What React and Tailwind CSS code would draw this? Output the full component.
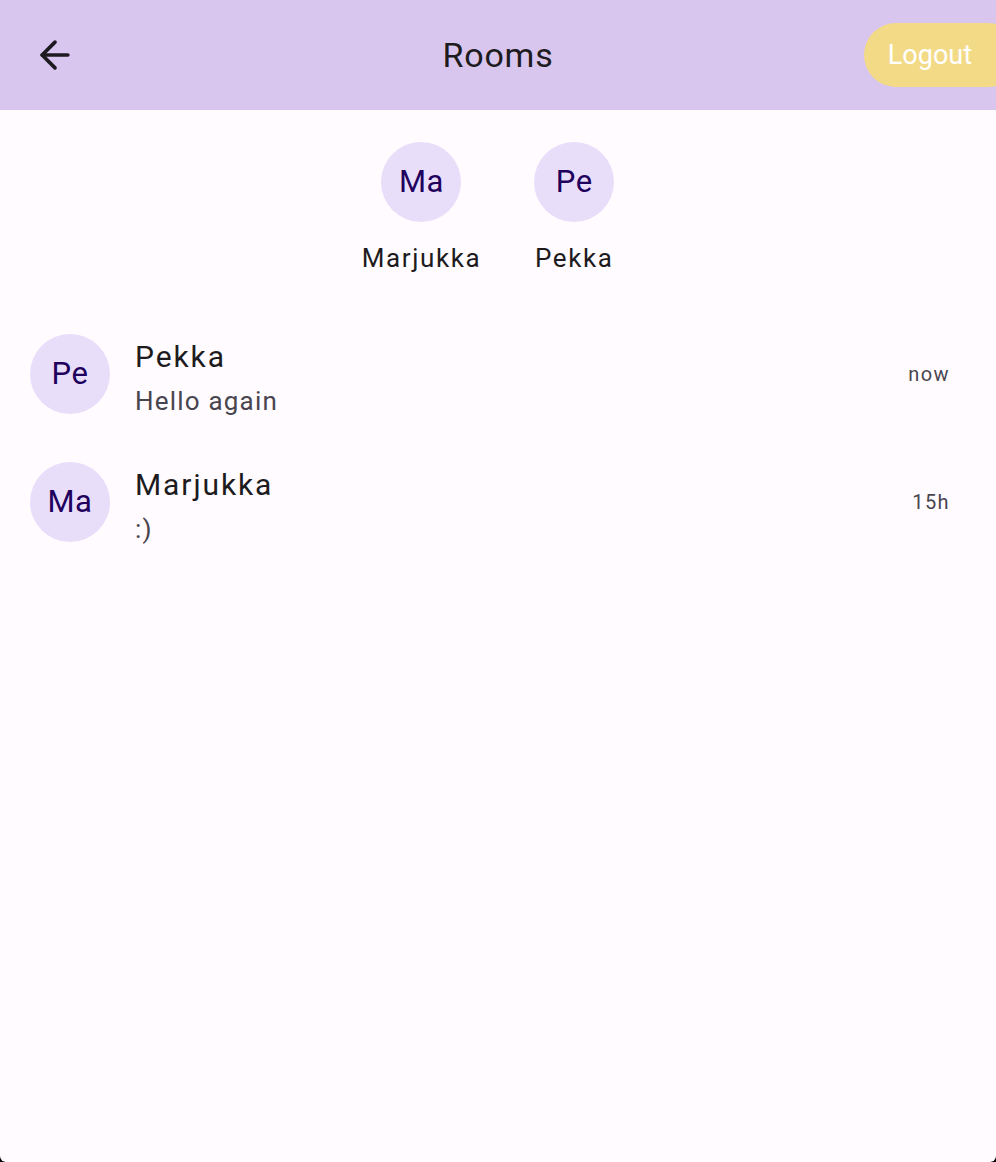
import { ArrowLeft } from 'lucide-react';

const users = [
  { initials: 'Ma', name: 'Marjukka' },
  { initials: 'Pe', name: 'Pekka' },
];

const rooms = [
  { initials: 'Pe', name: 'Pekka', last: 'Hello again', time: 'now' },
  { initials: 'Ma', name: 'Marjukka', last: ':)', time: '15h' },
];

function Avatar({ initials }) {
  return (
    <div className="w-20 h-20 rounded-full bg-[#e8defa] flex items-center justify-center text-[31px] tracking-[0.6px] text-[#21005d] shrink-0">
      {initials}
    </div>
  );
}

export default function App() {
  return (
    <div className="w-[996px] h-[1162px] bg-black" style={{ fontFamily: 'Roboto, "Noto Sans", sans-serif' }}>
      <div className="w-full h-full bg-[#fffbfe] rounded-b-[6px] overflow-hidden flex flex-col">
        <header className="h-[110px] bg-[#d8c6ef] flex items-center relative shrink-0">
          <button className="ml-[33px] w-11 h-11 flex items-center justify-center text-[#1d1b20]">
            <ArrowLeft size={44} strokeWidth={2} />
          </button>
          <h1 className="absolute left-1/2 -translate-x-1/2 text-[34px] tracking-[0.8px] text-[#1d1b20] leading-none">Rooms</h1>
          <button className="ml-auto mr-[-24px] h-16 pl-6 pr-12 rounded-full bg-[#f3da87] text-white text-[27px] leading-none">
            Logout
          </button>
        </header>

        <div className="flex justify-center gap-[53px] pt-8 pr-[20px]">
          {users.map((u) => (
            <div key={u.name} className="flex flex-col items-center">
              <Avatar initials={u.initials} />
              <span className="mt-[20px] text-[26px] leading-[32px] text-[#1d1b20] tracking-[1.6px]">{u.name}</span>
            </div>
          ))}
        </div>

        <div className="mt-[51px] flex flex-col gap-[30px]">
          {rooms.map((r) => (
            <div key={r.name} className="flex items-center pl-[30px] pr-[46px]">
              <Avatar initials={r.initials} />
              <div className="ml-[25px] flex flex-col pt-[10px]">
                <span className="text-[30px] leading-[44px] text-[#1d1b20] tracking-[1.9px]">{r.name}</span>
                <span className="text-[26px] leading-[44px] text-[#49454f] tracking-[1.2px]">{r.last}</span>
              </div>
              <span className="ml-auto text-[20px] text-[#49454f] tracking-[1.4px]">{r.time}</span>
            </div>
          ))}
        </div>
      </div>
    </div>
  );
}
